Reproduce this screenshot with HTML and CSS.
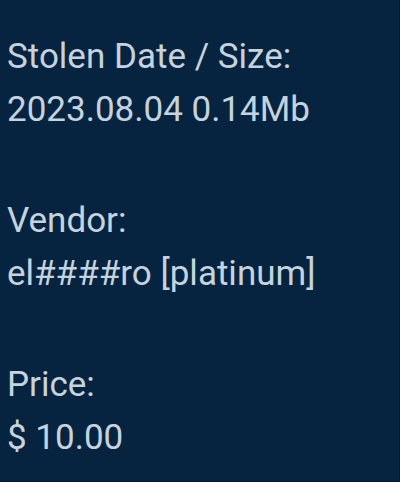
FILE: index.html
```html
<!DOCTYPE html>
<html lang="en">
<head>
    <meta charset="UTF-8">
    <meta name="viewport" content="width=device-width, initial-scale=1.0">
    <title>Item details</title>
    <link rel="stylesheet" href="styles.css">
</head>
<body>
    <div class="details">
        <div class="field">
            <div class="label">Stolen Date / Size:</div>
            <div class="value">2023.08.04 0.14Mb</div>
        </div>
        <div class="field">
            <div class="label">Vendor:</div>
            <div class="value">el####ro [platinum]</div>
        </div>
        <div class="field">
            <div class="label">Price:</div>
            <div class="value">$ 10.00</div>
        </div>
    </div>
</body>
</html>
```

FILE: styles.css
```css
html, body {
    margin: 0;
    height: 100%;
}
body {
    background-color: #062440;
    color: #c5d3df;
    font-family: Roboto, "Liberation Sans", sans-serif;
    font-size: 35px;
    line-height: 53px;
}
.details {
    box-sizing: border-box;
    height: 100%;
    padding: 30px 7px 0;
    border-right: 1px solid #021a30;
    border-bottom: 1px solid #021a30;
    display: flex;
    flex-direction: column;
    gap: 58px;
}
.label,
.value {
    white-space: nowrap;
}
```
